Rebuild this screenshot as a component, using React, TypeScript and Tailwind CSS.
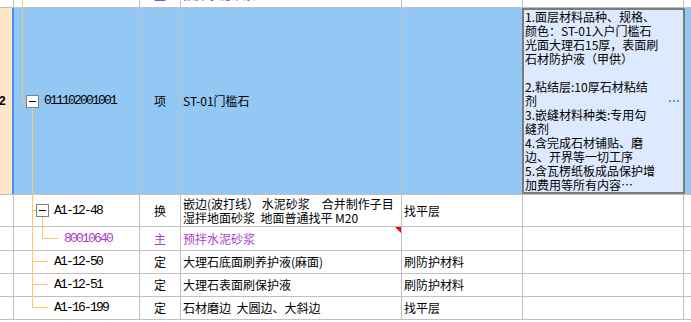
const cjk = "font-['Noto_Sans_CJK_SC',sans-serif]";
const mono = "font-['Liberation_Mono',monospace] tracking-[-1.8px] text-[13px]";
const grid = "border-[#c0c0c0]";

const boxLines = [
  "1.面层材料品种、规格、",
  "颜色：ST-01入户门槛石",
  "光面大理石15厚，表面刷",
  "石材防护液（甲供）",
  "",
  "2.粘结层:10厚石材粘结",
  "剂",
  "3.嵌缝材料种类:专用勾",
  "缝剂",
  "4.含完成石材铺贴、磨",
  "边、开界等一切工序",
  "5.含瓦楞纸板成品保护增",
  "加费用等所有内容…",
];

function Minus() {
  return (
    <div className="absolute w-[13px] h-[13px] border border-[#808080] bg-white flex items-center justify-center">
      <div className="w-[7px] h-px bg-black" />
    </div>
  );
}

function VLine({ className }: { className: string }) {
  return <div className={`absolute w-px bg-[#ffc66e] ${className}`} />;
}

function HLine({ className }: { className: string }) {
  return <div className={`absolute h-px bg-[#ffc66e] ${className}`} />;
}

type ChildRow = {
  h: string;
  code: string;
  kind: string;
  name: string[];
  feature: string;
  purple?: boolean;
  tree: React.ReactNode;
  indent: string;
  flag?: boolean;
};

const rows: ChildRow[] = [
  {
    h: "h-[32px]",
    code: "A1-12-48",
    kind: "换",
    name: ["嵌边(波打线） 水泥砂浆　合并制作子目", "湿拌地面砂浆  地面普通找平 M20"],
    feature: "找平层",
    indent: "pl-[40px]",
    tree: (
      <>
        <VLine className="left-[18px] top-0 -bottom-px" />
        <HLine className="left-[18px] top-[15px] w-[4px]" />
        <div className="absolute left-[22px] top-[9px]">
          <Minus />
        </div>
        <VLine className="left-[28px] top-[22px] -bottom-px" />
      </>
    ),
  },
  {
    h: "h-[24px]",
    code: "80010640",
    kind: "主",
    name: ["预拌水泥砂浆"],
    feature: "",
    purple: true,
    flag: true,
    indent: "pl-[50px]",
    tree: (
      <>
        <VLine className="left-[18px] top-0 -bottom-px" />
        <VLine className="left-[28px] top-0 h-[11px]" />
        <HLine className="left-[28px] top-[11px] w-[16px]" />
      </>
    ),
  },
  {
    h: "h-[23px]",
    code: "A1-12-50",
    kind: "定",
    name: ["大理石底面刷养护液(麻面)"],
    feature: "刷防护材料",
    indent: "pl-[40px]",
    tree: (
      <>
        <VLine className="left-[18px] top-0 -bottom-px" />
        <HLine className="left-[18px] top-[10px] w-[16px]" />
      </>
    ),
  },
  {
    h: "h-[23px]",
    code: "A1-12-51",
    kind: "定",
    name: ["大理石表面刷保护液"],
    feature: "刷防护材料",
    indent: "pl-[40px]",
    tree: (
      <>
        <VLine className="left-[18px] top-0 -bottom-px" />
        <HLine className="left-[18px] top-[10px] w-[16px]" />
      </>
    ),
  },
  {
    h: "h-[23px]",
    code: "A1-16-199",
    kind: "定",
    name: ["石材磨边  大圆边、大斜边"],
    feature: "找平层",
    indent: "pl-[40px]",
    tree: (
      <>
        <VLine className="left-[18px] top-0 h-[11px]" />
        <HLine className="left-[18px] top-[10px] w-[16px]" />
      </>
    ),
  },
];

export default function App() {
  return (
    <div className={`w-[691px] h-[322px] overflow-hidden bg-white text-[12px] leading-[14px] text-black ${cjk}`}>
      {/* cut-off row above */}
      <div className={`flex h-[8px] border-b ${grid} overflow-hidden`}>
        <div className={`w-[14px] border-r ${grid}`} />
        <div className={`relative w-[126px] border-r ${grid}`}>
          <VLine className="left-[8px] top-0 -bottom-px" />
        </div>
        <div className={`w-[41px] border-r ${grid} flex items-end justify-center`}>
          <div className="h-[25px] shrink-0 flex items-center text-[#a53fc6]">主</div>
        </div>
        <div className={`w-[221px] border-r ${grid} flex items-end pl-[2px]`}>
          <div className="h-[25px] shrink-0 flex items-center text-[#a53fc6]">预拌水泥砂浆</div>
        </div>
        <div className={`w-[121px] border-r ${grid}`} />
        <div className={`w-[161px] border-r ${grid}`} />
      </div>

      {/* selected row */}
      <div className={`flex h-[187px] border-b ${grid} bg-[#93c8f5]`}>
        <div className="w-[14px] bg-[#ffe6c8] border-r-2 border-[#3f8ff0] flex items-center">
          <span className="font-bold text-[12px] -ml-px font-['Liberation_Sans',sans-serif]">2</span>
        </div>
        <div className={`relative w-[126px] border-r ${grid} flex items-center pl-[30px]`}>
          <VLine className="left-[8px] top-0 h-[93px]" />
          <HLine className="left-[8px] top-[92px] w-[5px]" />
          <div className="absolute left-[12px] top-[87px]">
            <Minus />
          </div>
          <VLine className="left-[18px] top-[100px] -bottom-px" />
          <span className={mono}>011102001001</span>
        </div>
        <div className={`w-[41px] border-r ${grid} flex items-center justify-center`}>项</div>
        <div className={`w-[221px] border-r ${grid} flex items-center pl-[2px]`}>ST-01门槛石</div>
        <div className="w-[120px]" />
        <div className="relative w-[163px] h-[186px] border-2 border-[#7c7c7c] bg-[#dde9fc] overflow-hidden pl-px">
          {boxLines.map((l, i) => (
            <div key={i} className="h-[14px] whitespace-nowrap">
              {l}
            </div>
          ))}
          <div className="absolute right-[4px] top-[90px] flex gap-[2px]">
            <div className="w-[2px] h-[2px] bg-[#5b9be0]" />
            <div className="w-[2px] h-[2px] bg-[#5b9be0]" />
            <div className="w-[2px] h-[2px] bg-[#5b9be0]" />
          </div>
        </div>
        <div className="flex-1" />
      </div>

      {rows.map((r) => (
        <div key={r.code} className={`flex ${r.h} border-b ${grid}`}>
          <div className={`w-[14px] border-r ${grid}`} />
          <div className={`relative w-[126px] border-r ${grid} flex items-center ${r.indent}`}>
            {r.tree}
            <span className={`${mono} ${r.purple ? "text-[#a53fc6]" : ""}`}>{r.code}</span>
          </div>
          <div className={`w-[41px] border-r ${grid} flex items-center justify-center ${r.purple ? "text-[#a53fc6]" : ""}`}>
            {r.kind}
          </div>
          <div className={`relative w-[221px] border-r ${grid} flex flex-col justify-center pl-[2px] ${r.purple ? "text-[#a53fc6]" : ""}`}>
            {r.name.map((n) => (
              <div key={n} className="whitespace-pre">
                {n}
              </div>
            ))}
            {r.flag && (
              <div className="absolute top-0 right-0 w-0 h-0 border-t-[6px] border-l-[6px] border-t-[#ff0000] border-l-transparent" />
            )}
          </div>
          <div className={`w-[121px] border-r ${grid} flex items-center pl-[2px]`}>{r.feature}</div>
          <div className={`w-[161px] border-r ${grid}`} />
        </div>
      ))}
    </div>
  );
}
